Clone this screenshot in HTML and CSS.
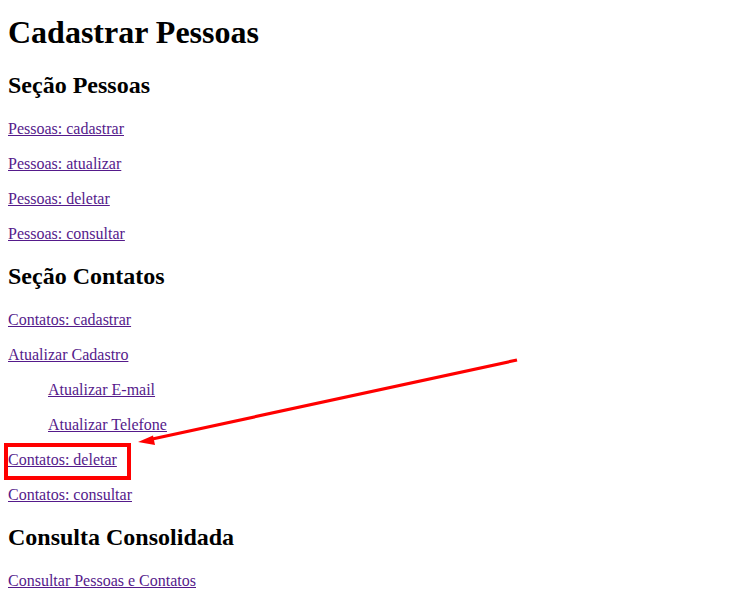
FILE: index.html
```html
<!DOCTYPE html>
<html lang="pt-BR">
<head>
<meta charset="utf-8">
<title>Cadastrar Pessoas</title>
<link rel="stylesheet" href="styles.css">
</head>
<body class="page">
<h1 class="title">Cadastrar Pessoas</h1>
<h2 class="section">Seção Pessoas</h2>
<p class="item"><a class="link" href="#">Pessoas: cadastrar</a></p>
<p class="item"><a class="link" href="#">Pessoas: atualizar</a></p>
<p class="item"><a class="link" href="#">Pessoas: deletar</a></p>
<p class="item"><a class="link" href="#">Pessoas: consultar</a></p>
<h2 class="section">Seção Contatos</h2>
<p class="item"><a class="link" href="#">Contatos: cadastrar</a></p>
<p class="item"><a class="link" href="#">Atualizar Cadastro</a></p>
<div class="sub">
<p class="item"><a class="link" href="#">Atualizar E-mail</a></p>
<p class="item"><a class="link" href="#">Atualizar Telefone</a></p>
</div>
<p class="item"><a class="link" href="#">Contatos: deletar</a></p>
<p class="item"><a class="link" href="#">Contatos: consultar</a></p>
<h2 class="section">Consulta Consolidada</h2>
<p class="item"><a class="link" href="#">Consultar Pessoas e Contatos</a></p>

<div class="highlight-box"></div>
<svg class="arrow" width="747" height="604" viewBox="0 0 747 604">
  <line x1="517" y1="360" x2="150" y2="439.5" stroke="#ff0000" stroke-width="3.2"/>
  <polygon points="138,442 153,435.5 155,445" fill="#ff0000"/>
</svg>
</body>
</html>
```
FILE: styles.css
```css
html, body {
  background: #ffffff;
}
.page {
  margin: 0 8px 8px;
  font-family: "Liberation Serif", "Times New Roman", serif;
  font-size: 16px;
  color: #000000;
}
.title {
  font-size: 32px;
  font-weight: bold;
  margin: 14px 0 21.44px;
}
.section {
  font-size: 24px;
  font-weight: bold;
  margin: 19.92px 0;
}
.item {
  margin: 16px 0;
  line-height: 19px;
}
.sub {
  margin-left: 40px;
}
.link {
  color: #551a8b;
  text-decoration: underline;
}
.highlight-box {
  position: absolute;
  left: 4px;
  top: 443px;
  width: 119px;
  height: 29px;
  border: 4px solid #ff0000;
}
.arrow {
  position: absolute;
  left: 0;
  top: 0;
  pointer-events: none;
}
```
